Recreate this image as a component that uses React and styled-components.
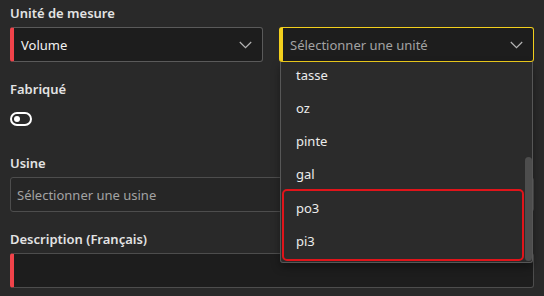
import React from 'react'
import styled, { createGlobalStyle } from 'styled-components'

const GlobalStyle = createGlobalStyle`
  html, body {
    margin: 0;
    padding: 0;
    background: #292929;
  }
  body {
    font-family: "Noto Sans", "Open Sans", sans-serif;
    color: #e8e8e8;
  }
`

const units = ['tasse', 'oz', 'pinte', 'gal']
const grouped = ['po3', 'pi3']

const Chevron = () => (
  <svg width="13" height="8" viewBox="0 0 13 8" fill="none">
    <path d="M0.8 1l5.7 5.7L12.2 1" stroke="#b5b5b5" strokeWidth="1.2" />
  </svg>
)

const App = () => {
  return (
    <Form>
      <GlobalStyle />
      <Row>
        <Field>
          <Label>Unité de mesure</Label>
          <Select $required>
            <Value>Volume</Value>
            <Chevron />
          </Select>
        </Field>
        <Field>
          <Spacer />
          <SelectWrap>
            <Select $active>
              <Value $placeholder>Sélectionner une unité</Value>
              <Chevron />
            </Select>
            <Menu>
              {units.map((u) => (
                <Option key={u}>{u}</Option>
              ))}
              <Group>
                {grouped.map((u) => (
                  <Option key={u} $inGroup>{u}</Option>
                ))}
              </Group>
            </Menu>
            <ScrollThumb />
          </SelectWrap>
        </Field>
      </Row>

      <Field>
        <Label>Fabriqué</Label>
        <Toggle>
          <Knob />
        </Toggle>
      </Field>

      <Field>
        <Label>Usine</Label>
        <Input>
          <Value $placeholder>Sélectionner une usine</Value>
        </Input>
      </Field>

      <Field>
        <Label>Description (Français)</Label>
        <Input $required />
      </Field>
    </Form>
  )
}

export default App

const Form = styled.div`
  display: flex;
  flex-direction: column;
  gap: 17px;
  padding: 3px 10px 0 10px;
  width: 524px;
`

const Row = styled.div`
  display: grid;
  grid-template-columns: 253px 255px;
  column-gap: 16px;
  position: relative;
  z-index: 2;
`

const Field = styled.div`
  display: flex;
  flex-direction: column;
  gap: 4px;
`

const Label = styled.div`
  font-size: 13px;
  font-weight: 600;
  line-height: 20px;
  color: #e3e3e3;
`

const Spacer = styled.div`
  height: 20px;
`

const SelectWrap = styled.div`
  position: relative;
`

const Select = styled.div`
  height: 35px;
  box-sizing: border-box;
  display: flex;
  align-items: center;
  justify-content: space-between;
  padding: 0 10px 0 7px;
  background: #1d1d1d;
  border: 1px solid ${(p) => (p.$active ? '#f2cf1d' : '#5a5a5a')};
  border-left: 4px solid ${(p) => (p.$required ? '#f0434a' : p.$active ? '#f2cf1d' : '#5a5a5a')};
  border-radius: 3px;
`

const Value = styled.span`
  font-size: 13px;
  color: ${(p) => (p.$placeholder ? '#a3a3a3' : '#f2f2f2')};
`

const Menu = styled.div`
  position: absolute;
  top: 35px;
  left: 1px;
  width: 253px;
  height: 201px;
  box-sizing: border-box;
  overflow: hidden;
  display: flex;
  flex-direction: column;
  justify-content: flex-end;
  background: #2b2b2b;
  border: 1px solid #575757;
  border-top: none;
  border-radius: 0 0 3px 3px;
  box-shadow: 0 4px 8px rgba(0, 0, 0, 0.35);
  padding: 0 8px 1px 0;
`

const ScrollThumb = styled.div`
  position: absolute;
  top: 130px;
  left: 246px;
  width: 7px;
  height: 104px;
  border-radius: 4px;
  background: #4d4d4d;
`

const Option = styled.div`
  flex: none;
  height: 33px;
  display: flex;
  align-items: center;
  padding-left: ${(p) => (p.$inGroup ? '12px' : '15px')};
  font-size: 13px;
  color: #ececec;
`

const Group = styled.div`
  flex: none;
  margin: -1px 0 0 1px;
  border: 2px solid #e0141a;
  border-radius: 5px;
  padding-bottom: 2px;
`

const Toggle = styled.div`
  margin: 9px 0 10px;
  width: 22px;
  height: 14px;
  box-sizing: border-box;
  border: 2px solid #ffffff;
  border-radius: 8px;
  display: flex;
  align-items: center;
  padding: 0 2px;
`

const Knob = styled.div`
  width: 6px;
  height: 6px;
  border-radius: 50%;
  background: #ffffff;
`

const Input = styled.div`
  height: 35px;
  box-sizing: border-box;
  display: flex;
  align-items: center;
  padding-left: ${(p) => (p.$required ? '10px' : '6px')};
  background: ${(p) => (p.$required ? '#1d1d1d' : '#262626')};
  border: 1px solid #4d4d4d;
  border-left: ${(p) => (p.$required ? '4px solid #f0434a' : '1px solid #4d4d4d')};
  border-radius: 3px;
`
